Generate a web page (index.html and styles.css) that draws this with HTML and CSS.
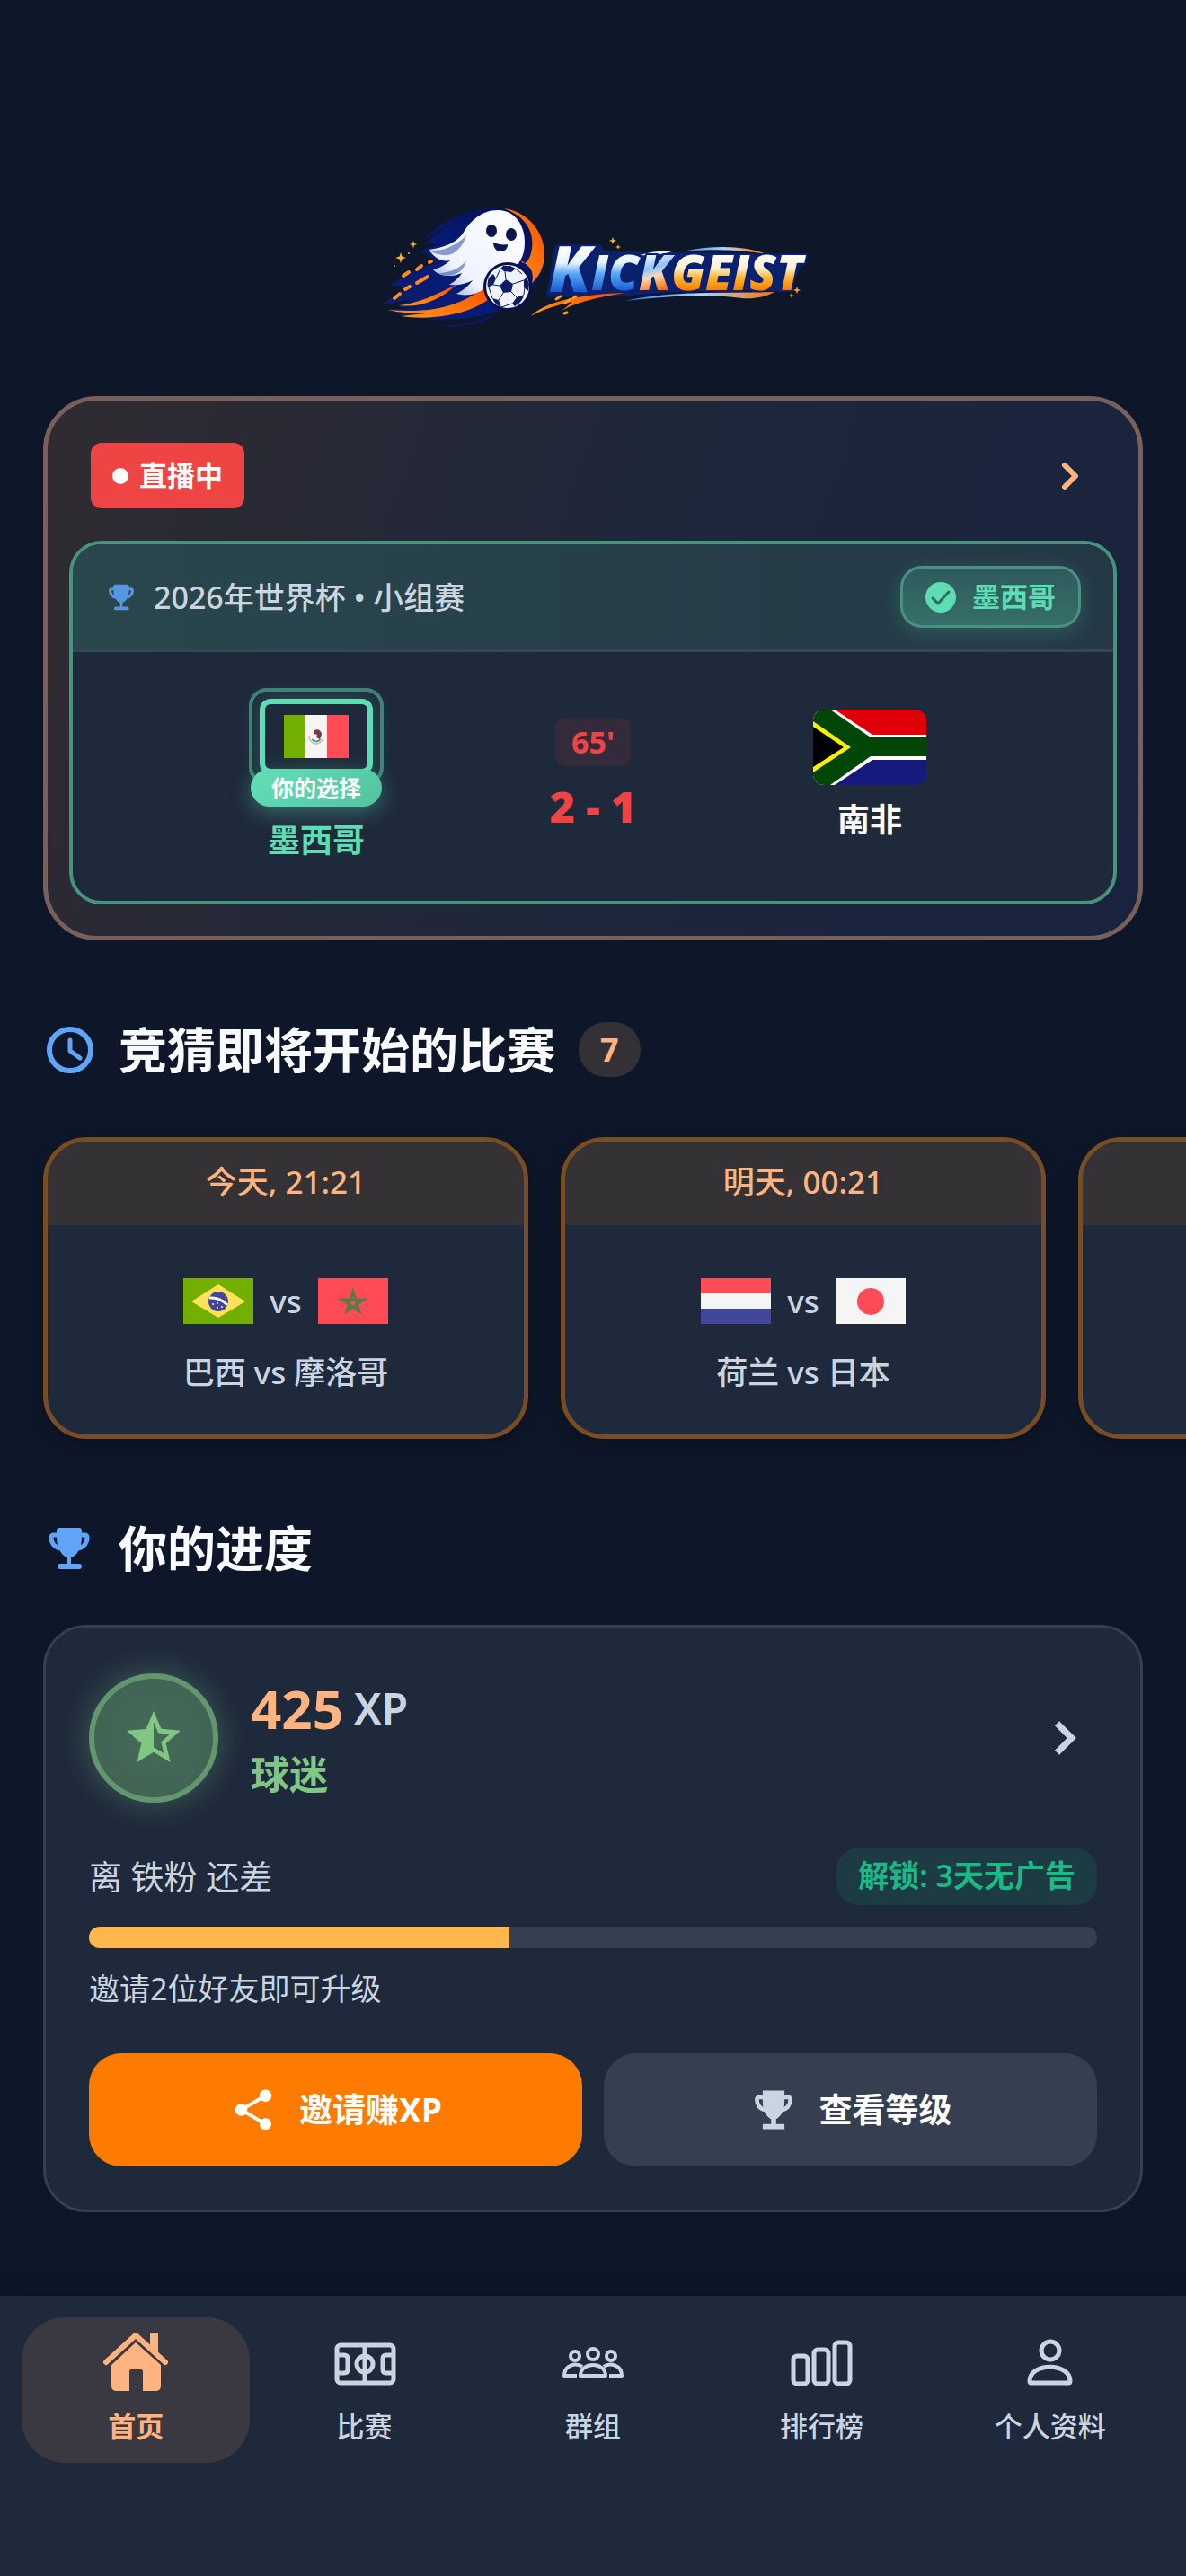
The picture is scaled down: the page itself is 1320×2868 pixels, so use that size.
FILE: index.html
```html
<!DOCTYPE html>
<html lang="zh-CN">
  <head>
    <meta charset="utf-8" />
    <meta name="viewport" content="width=device-width, initial-scale=1" />
    <title>Kickgeist</title>
    <link rel="stylesheet" href="styles.css">
  </head>
  <body>
    <!-- shared icons -->
    <svg class="defs" aria-hidden="true">
      <symbol id="i-trophy" viewBox="-6 -6 58 58">
        <path d="M12 0h22q3 0 3 3c0 11 0 17-4 23-2 4-5 6-8 7v7h9q3 0 3 3t-3 3H13q-3 0-3-3t3-3h8v-7c-3-1-6-3-8-7-4-6-4-12-4-23q0-3 3-3z"/>
        <path fill="none" stroke="#60a5fa" stroke-width="5" d="M11 8H6Q3 8 3 11c0 6 4 11 10 12M35 8h5q3 0 3 3c0 6-4 11-10 12"/>
      </symbol>
    </svg>

    <main>
      <h1 class="logo">
        <svg viewBox="-5 0 510 170" role="img" aria-label="Kickgeist">
          <defs>
            <linearGradient id="g-blue" gradientUnits="userSpaceOnUse" x1="0" y1="66" x2="0" y2="114">
              <stop offset="0" stop-color="#fff"/><stop offset=".35" stop-color="#e4f2ff"/><stop offset=".6" stop-color="#56a8f5"/><stop offset="1" stop-color="#1c5bd0"/>
            </linearGradient>
            <linearGradient id="g-mix" gradientUnits="userSpaceOnUse" x1="310" y1="72" x2="322" y2="114">
              <stop offset="0" stop-color="#fff"/><stop offset=".4" stop-color="#8cc4f8"/><stop offset=".62" stop-color="#f6d9b4"/><stop offset="1" stop-color="#ff6d00"/>
            </linearGradient>
            <linearGradient id="g-gold" gradientUnits="userSpaceOnUse" x1="0" y1="72" x2="0" y2="114">
              <stop offset="0" stop-color="#fff"/><stop offset=".4" stop-color="#fff0cf"/><stop offset=".65" stop-color="#ffb52e"/><stop offset="1" stop-color="#ff7a00"/>
            </linearGradient>
            <linearGradient id="g-swoosh" x1="0" y1="1" x2="1" y2="0">
              <stop offset="0" stop-color="#0b1f6b"/><stop offset=".5" stop-color="#071a78"/><stop offset="1" stop-color="#04104f"/>
            </linearGradient>
            <linearGradient id="g-flame" x1="0" y1="1" x2="1" y2="0">
              <stop offset="0" stop-color="#ff9c1a"/><stop offset="1" stop-color="#ff4d00"/>
            </linearGradient>
            <linearGradient id="g-ghost" x1="0" y1="1" x2="1" y2="0">
              <stop offset="0" stop-color="#6f8fd8"/><stop offset=".3" stop-color="#eef3ff"/><stop offset="1" stop-color="#fff"/>
            </linearGradient>
            <linearGradient id="g-arc" x1="0" y1="0" x2="1" y2="0">
              <stop offset="0" stop-color="#2f7fe8"/><stop offset=".5" stop-color="#a9d4ff"/><stop offset="1" stop-color="#ff6d00"/>
            </linearGradient>
            <path id="spark" d="M0-6 1.4-1.4 6 0 1.4 1.4 0 6-1.4 1.4-6 0-1.4-1.4z"/>
          </defs>

          <!-- tail and halo -->
          <path fill="url(#g-swoosh)" d="M62 56C84 34 112 21 148 22C178 24 195 48 195 74C195 98 181 116 161 128C133 145 91 150 41 142C34 140 28 137 22 134C34 135 44 134 52 131L34 132L46 124L15 129C24 122 36 115 46 110L24 107C40 98 54 88 72 84C76 80 70 74 57 70C65 68 72 65 78 61L62 62C76 50 88 42 104 33C90 40 76 48 62 56z"/>
          <path fill="#0a1c82" opacity=".7" d="M70 151c28 4 52-2 75-14-16 14-44 20-75 14z"/>
          <path fill="url(#g-flame)" d="M151 22c32 5 46 32 45 54-1 13-7 23-14 29 4-16-6-20-12-25 2 6 8 3 11-8 5-20-3-40-30-50z"/>
          <path fill="url(#g-flame)" d="M22 135c40 3 76 0 108-26l4 14c-24 18-64 24-98 19l28-3c-16 0-30-1-42-4z"/>
          <path fill="url(#g-flame)" d="M34 130c22-2 40-12 64-23-18 17-40 26-64 23z"/>
          <g stroke="#ff8a1f" stroke-width="4" stroke-linecap="round">
            <path d="M39 97l6-4M54 90l5-4M68 82l2-1M54 105l12-7M41 112l5-3M29 122l6-5"/>
          </g>

          <!-- ghost -->
          <path fill="url(#g-ghost)" d="M146 24c17 1 28 16 28 36 0 16-7 26-16 32-8 6-26 8-30 20-8 6-20 8-30 5 8-4 14-9 18-15-10 5-18 6-26 5 7-4 11-8 14-13-12 5-26 4-32-4 6-1 14-5 19-10-11 2-17-3-24-12 18-2 31-8 38-18 7-12 20-27 41-26z"/>
          <path fill="#20409a" opacity=".5" d="M67 68c12 3 28-2 42-16-4 14-14 22-22 22s-15-2-20-6zM77 94c12 0 24-4 32-14-4 16-18 20-32 14z"/>
          <ellipse cx="137" cy="47" rx="6" ry="7" fill="#0a1550"/>
          <ellipse cx="159" cy="51" rx="6" ry="7" fill="#0a1550"/>
          <path fill="#0a1550" d="M139 60c5 2 11 3 16 2 0 6-4 8-8 8-5 0-8-5-8-10z"/>

          <!-- ball -->
          <circle cx="155" cy="109" r="27" fill="#07104a"/>
          <circle cx="155" cy="109" r="24" fill="#eef2fb"/>
          <g fill="#0d1c66">
            <path d="M153 101l8 5-2 9-9 1-4-8zM150 86l8 0 6 3-5 4-8-1-4-3zM134 99l5-4 3 5-3 7-6 3c-1-4 0-8 1-11zM176 98l3 8-1 8-5-4 0-8zM138 122l7 2 3 8c-5-2-8-5-10-10zM165 121l8-3c-1 6-5 10-10 13l-3-3z"/>
          </g>
          <path fill="none" stroke="#0d1c66" d="M153 101l-1-9M161 106l12-4M159 115l6 6M150 116l-5 8M146 108l-7-1M164 89l7 6M142 100l5-11M174 110l-1 8M148 132l12-4M138 122l-4-12"/>

          <!-- wordmark -->
          <path fill="#0a2a9c" d="M208 63l50-1 4 8 226 3-20 42c-60-3-136-1-176 4l-94 2z" opacity=".55"/>
          <path fill="url(#g-arc)" d="M350 70c36-8 70-6 94 3-30-5-60-6-94-3z"/>
          <path fill="#e9f4ff" d="M302 74c12-4 24-5 36-4-10 3-22 5-36 4z"/>
          <path fill="url(#g-flame)" d="M181 142c16-16 50-24 104-26-34 6-62 12-74 24l16-14c-18 4-32 8-46 16z"/>
          <path fill="url(#g-arc)" d="M286 125c50-12 110-8 166-10-10 6-24 8-36 7-42-6-84-2-130 3z"/>
          <path stroke="#ff9a1f" stroke-width="3" stroke-linecap="round" d="M209 123l5-3M219 127l6-4M228 122l3-2M218 139l3-1"/>
          <g class="wordmark">
            <text x="201" y="115" font-size="70" fill="url(#g-blue)">K</text>
            <text x="248" y="113" font-size="54"><tspan fill="url(#g-blue)">IC</tspan><tspan fill="url(#g-mix)">K</tspan><tspan fill="url(#g-gold)">GEIST</tspan></text>
          </g>

          <g fill="#ffb02e">
            <use href="#spark" x="36" y="77"/>
            <use href="#spark" transform="translate(50 62) scale(.7)"/>
            <use href="#spark" transform="translate(272 58) scale(.7)"/>
            <use href="#spark" transform="translate(278 65) scale(.5)"/>
            <use href="#spark" transform="translate(477 113) scale(.7)"/>
            <use href="#spark" transform="translate(471 119) scale(.5)"/>
            <circle cx="45" cy="72" r="1"/><circle cx="29" cy="86" r="1"/>
          </g>
        </svg>
      </h1>

      <section class="live">
        <div class="live-top">
          <span class="live-badge"><i></i>直播中</span>
          <button class="icon-btn" aria-label="查看直播">
            <svg width="58" height="58" viewBox="0 0 58 58" fill="none" stroke="#ffb380" stroke-width="6" stroke-linecap="round" stroke-linejoin="round"><path d="M24 17l12 12-12 12"/></svg>
          </button>
        </div>

        <article class="match">
          <header>
            <svg class="cup" width="36" height="36"><use href="#i-trophy"/></svg>
            <span class="league">2026年世界杯 • 小组赛</span>
            <span class="pick-pill">
              <svg width="34" height="34" viewBox="0 0 34 34"><circle cx="17" cy="17" r="17" fill="#5edcb4"/><path d="M8 18l6 6 12-13" fill="none" stroke="#2f6a62" stroke-width="3" stroke-linecap="round" stroke-linejoin="round"/></svg>
              墨西哥
            </span>
          </header>
          <div class="teams">
            <div class="team picked">
              <div class="ring">
                <div class="frame">
                  <svg width="72" height="48" viewBox="0 0 72 48">
                    <path fill="#73af00" d="M0 0h24v48H0z"/><path fill="#f5f5f5" d="M24 0h24v48H24z"/><path fill="#ff4b55" d="M48 0h24v48H48z"/>
                    <path d="M28 23a8 8 0 0 0 16 2" fill="none" stroke="#b9a84a" stroke-width="1"/>
                    <path d="M31 27q5 5 10 0" fill="none" stroke="#4da3a0" stroke-width="2"/>
                    <path d="M33 18c4-4 9-1 9 4l-2 5-4-2 1-3-4-1z" fill="#7b3a4a"/>
                  </svg>
                </div>
                <span class="your-pick">你的选择</span>
              </div>
              <strong>墨西哥</strong>
            </div>
            <div class="score">
              <span class="minute">65'</span>
              <b>2 - 1</b>
            </div>
            <div class="team">
              <svg class="flag-lg" width="126" height="84" viewBox="0 0 126 84">
                <path fill="#e00008" d="M0 0h126v42H0z"/><path fill="#161a7c" d="M0 42h126v42H0z"/>
                <path fill="#fff" d="M0 0h24l42 28h60v28H66L24 84H0z"/>
                <path fill="#004707" d="M0 0h19l45 31h62v21H64L19 84H0z"/>
                <path fill="#fcf000" d="M0 13l42 29L0 70z"/><path fill="#000" d="M0 19l34 23L0 64z"/>
              </svg>
              <strong>南非</strong>
            </div>
          </div>
        </article>
      </section>

      <section>
        <h2>
          <svg width="58" height="58" viewBox="0 0 58 58" fill="none" stroke="#60a5fa" stroke-linecap="round" stroke-linejoin="round"><circle cx="30" cy="29" r="23" stroke-width="6"/><path d="M30 18v12l11 8" stroke-width="5"/></svg>
          竞猜即将开始的比赛
          <span class="count">7</span>
        </h2>
        <div class="upcoming">
          <a class="fixture" href="#">
            <time>今天, 21:21</time>
            <div class="flags">
              <svg width="78" height="51" viewBox="0 0 78 51">
                <path fill="#73af00" d="M0 0h78v51H0z"/><path fill="#ffe15a" d="M39 7l30 19-30 18L9 26z"/>
                <circle cx="39" cy="26" r="11" fill="#41479b"/><path d="M29 22q12-1 20 8" fill="none" stroke="#f5f5f5" stroke-width="3"/>
                <g fill="#f5f5f5"><circle cx="33" cy="29" r="1"/><circle cx="38" cy="33" r="1"/><circle cx="43" cy="32" r="1"/><circle cx="38" cy="28" r="1"/></g>
              </svg>
              vs
              <svg width="78" height="51" viewBox="0 0 78 51">
                <path fill="#ff4b55" d="M0 0h78v51H0z"/>
                <path fill="none" stroke="#5c7a46" stroke-width="3" d="M39 15l7 22-19-13h24L32 37z"/>
              </svg>
            </div>
            <p>巴西 vs 摩洛哥</p>
          </a>
          <a class="fixture" href="#">
            <time>明天, 00:21</time>
            <div class="flags">
              <svg width="78" height="51" viewBox="0 0 78 51"><path fill="#ff4b55" d="M0 0h78v17H0z"/><path fill="#f5f5f5" d="M0 17h78v17H0z"/><path fill="#41479b" d="M0 34h78v17H0z"/></svg>
              vs
              <svg width="78" height="51" viewBox="0 0 78 51"><path fill="#f5f5f5" d="M0 0h78v51H0z"/><circle cx="39" cy="26" r="15" fill="#ff4b55"/></svg>
            </div>
            <p>荷兰 vs 日本</p>
          </a>
          <a class="fixture" href="#"><time></time></a>
        </div>
      </section>

      <section>
        <h2>
          <svg class="cup" width="58" height="58"><use href="#i-trophy"/></svg>
          你的进度
        </h2>
        <div class="progress">
          <div class="rank">
            <span class="medal">
              <svg width="72" height="72" viewBox="0 0 24 24"><path fill="#81c784" d="M22 9.240l-7.190-.62L12 2 9.190 8.630 2 9.240l5.460 4.730L5.820 21 12 17.270 18.180 21l-1.630-7.030L22 9.240zM12 15.400V6.100l1.710 4.040 4.380.38-3.320 2.880 1 4.280L12 15.400z"/></svg>
            </span>
            <div class="xp">
              <p><b>425</b> <span>XP</span></p>
              <strong>球迷</strong>
            </div>
            <button class="icon-btn" aria-label="查看进度">
              <svg width="72" height="72" viewBox="0 0 24 24"><path fill="#cbd5e1" stroke="#cbd5e1" stroke-width=".4" d="M10 6L8.590 7.410 13.170 12l-4.580 4.590L10 18l6-6z"/></svg>
            </button>
          </div>
          <div class="next">
            <span id="next-label">离 铁粉 还差</span>
            <span class="unlock">解锁: 3天无广告</span>
          </div>
          <div class="bar" role="progressbar" aria-labelledby="next-label" aria-valuenow="42" aria-valuemin="0" aria-valuemax="100"><div style="width: 41.67%"></div></div>
          <p class="hint">邀请2位好友即可升级</p>
          <div class="actions">
            <button class="btn primary">
              <svg width="54" height="54" viewBox="0 0 24 24"><path fill="#fff" d="M18 16.080c-.76 0-1.440.3-1.960.77L8.910 12.700c.05-.23.09-.46.09-.7s-.04-.47-.09-.7l7.050-4.110c.54.5 1.250.81 2.040.81 1.660 0 3-1.340 3-3s-1.340-3-3-3-3 1.340-3 3c0 .24.04.47.09.7L8.040 9.810C7.500 9.310 6.790 9 6 9c-1.660 0-3 1.340-3 3s1.340 3 3 3c.79 0 1.500-.31 2.040-.81l7.120 4.160c-.05.21-.08.43-.08.65 0 1.610 1.310 2.920 2.920 2.920s2.920-1.310 2.920-2.920-1.310-2.920-2.920-2.920z"/></svg>
              邀请赚XP
            </button>
            <button class="btn">
              <svg width="54" height="54" viewBox="-6 -6 58 58">
                <path fill="#cbd5e1" d="M10 0h26v14c0 11-5 18-10 20v6h10v6H10v-6h10v-6C15 32 10 25 10 14z"/>
                <path fill="none" stroke="#cbd5e1" stroke-width="5" d="M11 8H6Q3 8 3 11c0 6 4 11 10 12M35 8h5q3 0 3 3c0 6-4 11-10 12"/>
              </svg>
              查看等级
            </button>
          </div>
        </div>
      </section>
    </main>

    <nav>
      <a class="active" href="#">
        <svg viewBox="0 0 72 72">
          <path d="M3 35L36 5l33 30" fill="none" stroke="currentColor" stroke-width="6" stroke-linecap="round" stroke-linejoin="round"/>
          <path fill="currentColor" d="M52 4q0-2 2-2h5q2 0 2 2v21l-9-8zM36 13l28 25v23q0 6-6 6H44V45q0-2-2-2H31q-2 0-2 2v22H15q-6 0-6-6V38z"/>
        </svg>
        首页
      </a>
      <a href="#">
        <svg viewBox="0 0 72 72" fill="none" stroke="currentColor" stroke-width="5">
          <rect x="5" y="16" width="63" height="42" rx="4"/><path d="M36 16v42M5 27h8q4 0 4 4v12q0 4-4 4H5M68 27h-8q-4 0-4 4v12q0 4 4 4h8"/><circle cx="36" cy="37" r="9"/>
        </svg>
        比赛
      </a>
      <a href="#">
        <svg viewBox="0 0 72 72" fill="none" stroke="currentColor" stroke-width="4" stroke-linejoin="round">
          <circle cx="36" cy="26" r="6"/><circle cx="16" cy="28" r="5"/><circle cx="56" cy="28" r="5"/>
          <path d="M22 50c0-16 28-16 28 0zM24 40c-7-5-20-2-20 10h14M48 40c7-5 20-2 20 10H54"/>
        </svg>
        群组
      </a>
      <a href="#">
        <svg viewBox="0 0 72 72" fill="none" stroke="currentColor" stroke-width="5">
          <rect x="5" y="28" width="16" height="31" rx="4"/><rect x="28" y="21" width="16" height="38" rx="4"/><rect x="51" y="13" width="17" height="46" rx="4"/>
        </svg>
        排行榜
      </a>
      <a href="#">
        <svg viewBox="0 0 72 72" fill="none" stroke="currentColor" stroke-width="5" stroke-linejoin="round">
          <circle cx="36" cy="22" r="10"/><path d="M13 56c0-21 45-21 45 0q0 2-2 2H15q-2 0-2-2z"/>
        </svg>
        个人资料
      </a>
    </nav>
  </body>
</html>
```
FILE: styles.css
```css
* { box-sizing: border-box; }

body {
    margin: 0;
    min-height: 100vh;
    display: flex;
    flex-direction: column;
    background: #0e172a;
    color: #f8fafc;
    font-family: "Noto Sans", "Noto Sans CJK SC", sans-serif;
    font-size: 34px;
    line-height: 48px;
}

h1, h2, p { margin: 0; }
a { color: inherit; text-decoration: none; }
svg { display: block; flex: none; }
.defs { position: absolute; width: 0; height: 0; }
.cup { fill: #60a5fa; }

button {
    font: inherit;
    color: inherit;
    border: 0;
    padding: 0;
    background: none;
    cursor: pointer;
}

main {
    flex: 1;
    padding: 210px 48px 93px;
    overflow: hidden;
}

.logo { margin-bottom: 61px; }
.logo svg { width: 510px; max-width: 100%; margin: 0 auto; }
.wordmark {
    font-family: "Open Sans", "Liberation Sans", sans-serif;
    font-weight: 800;
    font-style: italic;
    stroke: #0a1f78;
    stroke-width: 4px;
    paint-order: stroke;
}

/* live match */
.live {
    border: 5px solid #79605a;
    border-radius: 60px;
    background: linear-gradient(110deg, #302b31 0%, #1e273a 50%, #19233f 100%);
    padding-bottom: 35px;
}

.live-top {
    display: flex;
    justify-content: space-between;
    align-items: center;
    padding: 47px 48px 36px;
}

.live-badge {
    display: flex;
    align-items: center;
    gap: 12px;
    padding: 12px 24px;
    border-radius: 12px;
    background: #ef4444;
    color: #fff;
    font-size: 31px;
    font-weight: bold;
    line-height: 49px;
}
.live-badge i { width: 18px; height: 18px; border-radius: 50%; background: #fff; }

.match {
    margin: 0 24px;
    border: 4px solid #48937f;
    border-radius: 36px;
    background: #1e293b;
    overflow: hidden;
}

.match header {
    display: flex;
    align-items: center;
    gap: 18px;
    padding: 24px 36px;
    border-bottom: 3px solid #334855;
    background: linear-gradient(90deg, #29474d, #243846);
}
.match header .cup { opacity: .85; }

.league { flex: 1; font-weight: 500; color: #cbd5e1; }

.pick-pill {
    display: flex;
    align-items: center;
    gap: 18px;
    padding: 8px 25px;
    border: 3px solid #48937f;
    border-radius: 24px;
    background: linear-gradient(#305a5c, #366f68);
    box-shadow: 0 6px 24px rgba(94, 220, 180, .2);
    color: #5edcb4;
    font-size: 31px;
    font-weight: bold;
    line-height: 47px;
}

.teams {
    display: grid;
    grid-template-columns: 1fr 146px 1fr;
    align-items: center;
    padding: 40px 36px;
}

.team {
    display: flex;
    flex-direction: column;
    align-items: center;
    gap: 12px;
}
.team strong { font-size: 36px; font-weight: 600; line-height: 54px; }

.picked { gap: 35px; }
.picked strong { font-weight: bold; color: #5edcb4; }

.flag-lg { border-radius: 12px; }

.ring {
    position: relative;
    padding: 8px;
    border: 4px solid #3f8075;
    border-radius: 20px;
}
.frame {
    padding: 12px 21px;
    border: 6px solid #5edcb4;
    border-radius: 12px;
    box-shadow: 0 0 24px rgba(94, 220, 180, .25);
}
.your-pick {
    position: absolute;
    left: 50%;
    bottom: -28px;
    transform: translateX(-50%);
    padding: 0 23px;
    border-radius: 21px;
    background: linear-gradient(135deg, #62dfb6, #55c2a0);
    box-shadow: 0 6px 24px rgba(94, 220, 180, .4);
    color: #fff;
    font-size: 25px;
    font-weight: bold;
    line-height: 42px;
    white-space: nowrap;
}

.score {
    display: flex;
    flex-direction: column;
    align-items: center;
    gap: 12px;
    color: #ef4444;
    font-weight: bold;
}
.score b { font-size: 48px; line-height: 66px; }
.minute {
    padding: 3px 18px;
    border-radius: 12px;
    background: #332b3b;
}

/* section headings */
h2 {
    display: flex;
    align-items: center;
    gap: 26px;
    height: 61px;
    margin: 91px 0 55px;
    font-size: 54px;
    font-weight: bold;
}

.count {
    padding: 6px 24px;
    border-radius: 30px;
    background: #343136;
    color: #ffb380;
    font-size: 36px;
    line-height: 49px;
}

/* upcoming matches */
.upcoming {
    display: flex;
    gap: 36px;
    margin: 0 -48px -36px;
    padding: 12px 48px 36px;
    overflow-x: auto;
    scrollbar-width: none;
}

.fixture {
    flex: 0 0 540px;
    border: 5px solid #784c25;
    border-radius: 48px;
    background: #1e293b;
    box-shadow: 0 6px 20px rgba(0, 0, 0, .3);
    color: #cbd5e1;
    font-size: 35px;
    font-weight: 500;
    text-align: center;
    overflow: hidden;
}
.fixture time {
    display: block;
    min-height: 93px;
    padding: 21px 24px 24px;
    background: #353235;
    color: #ffb380;
}
.fixture p { margin: 30px 0 45px; }

.flags {
    display: flex;
    justify-content: center;
    align-items: center;
    gap: 18px;
    height: 51px;
    margin-top: 59px;
}

/* progress card */
.progress {
    padding: 51px 48px 48px;
    border: 3px solid #343f50;
    border-radius: 48px;
    background: #1e293b;
}

.rank { display: flex; align-items: center; gap: 36px; }

.medal {
    display: grid;
    place-items: center;
    width: 144px;
    height: 144px;
    border: 6px solid #62966f;
    border-radius: 50%;
    background: radial-gradient(#456b59, #406153);
    box-shadow: 0 0 36px rgba(129, 199, 132, .35);
}

.xp { flex: 1; }
.xp p { display: flex; align-items: center; gap: 12px; height: 76px; }
.xp b { font-size: 60px; color: #ffb380; }
.xp span { font-size: 48px; font-weight: 600; color: #cbd5e1; }
.xp strong { display: block; margin-top: 6px; font-size: 43px; font-weight: 600; line-height: 60px; color: #81c784; }

.next {
    display: flex;
    justify-content: space-between;
    align-items: center;
    margin-top: 51px;
    font-size: 37px;
    color: #cbd5e1;
}
.unlock {
    padding: 6px 24px 9px;
    border-radius: 24px;
    background: #1d3b43;
    color: #19b988;
    font-size: 34px;
    font-weight: 600;
}

.bar {
    height: 24px;
    margin: 24px 0 21px;
    border-radius: 12px;
    background: #353f4f;
    overflow: hidden;
}
.bar div { height: 100%; background: #ffb74d; }

.hint { color: #cbd5e1; }

.actions {
    display: grid;
    grid-template-columns: 1fr 1fr;
    gap: 24px;
    margin-top: 48px;
}
.btn {
    display: flex;
    justify-content: center;
    align-items: center;
    gap: 24px;
    height: 126px;
    border-radius: 36px;
    background: #353f4f;
    color: #fff;
    font-size: 37px;
    font-weight: 600;
}
.primary { background: #ff7b00; font-weight: bold; }

/* tab bar */
nav {
    display: flex;
    padding: 24px 24px 126px;
    background: #1e293b;
    box-shadow: 0 -6px 24px rgba(0, 0, 0, .2);
}
nav a {
    flex: 1;
    display: flex;
    flex-direction: column;
    align-items: center;
    gap: 12px;
    padding: 15px 0 18px;
    border-radius: 48px;
    color: #cbd5e1;
    font-size: 31px;
    font-weight: 500;
    line-height: 45px;
}
nav svg { width: 72px; height: 72px; }
nav .active { background: #3a3840; color: #ffb380; font-weight: bold; }
```
